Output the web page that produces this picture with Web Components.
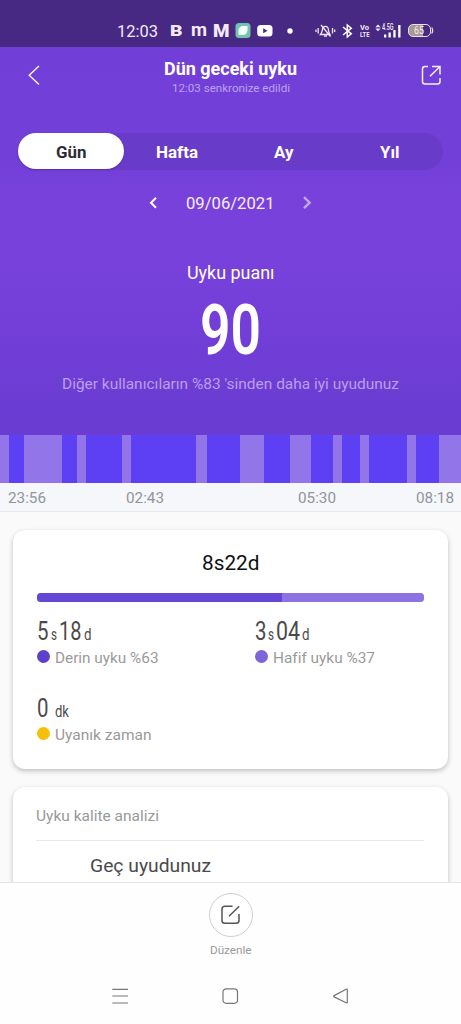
<!DOCTYPE html>
<html lang="tr">
<head>
<meta charset="utf-8">
<title>Dün geceki uyku</title>
<style>
html,body{margin:0;padding:0;background:#fafafa}
body{width:461px;height:1024px;overflow:hidden;font-family:Roboto,"Liberation Sans",sans-serif}
</style>
</head>
<body>
<sleep-app></sleep-app>
<script>
const define = (name, html) => {
  const t = document.createElement('template');
  t.innerHTML = html;
  customElements.define(name, class extends HTMLElement {
    constructor() {
      super();
      this.attachShadow({mode: 'open'}).append(t.content.cloneNode(true));
    }
  });
};

/* One line of text, condensed or widened to the width in "w". */
customElements.define('fit-text', class extends HTMLElement {
  connectedCallback() {
    if (this.shadowRoot) return;
    const w = +this.getAttribute('w'), s = this.getAttribute('s'), l = this.getAttribute('l') || 20;
    this.attachShadow({mode: 'open'}).innerHTML = `<style>
      :host{display:block;flex:none;width:${w}px;height:${l}px;line-height:${l}px;font-size:${s}px;white-space:nowrap}
      span{display:inline-block;transform-origin:0 50%}</style><span><slot></slot></span>`;
    const span = this.shadowRoot.querySelector('span');
    const n = span.getBoundingClientRect().width;
    if (n) span.style.transform = `scaleX(${w / n})`;
  }
});

define('status-bar', `<style>
:host{display:flex;height:47px;background:#472882;color:#f3eafa;box-sizing:border-box;padding:21px 0 0 117px;align-items:flex-start}
svg{display:block;flex:none}
.b{font-weight:900}
</style>
<fit-text w="41" s="16.8">12:03</fit-text>
<fit-text class="b" w="12.5" s="15.5" style="margin-left:11.5px">B</fit-text>
<fit-text class="b" w="16" s="18" l="18" style="margin-left:8.5px;font-weight:700">m</fit-text>
<fit-text class="b" w="16.5" s="19" style="margin-left:6.5px">M</fit-text>
<svg width="16" height="20" style="margin-left:5px"><rect x=".5" y="2" width="15" height="15" rx="3.5" fill="#70c5ac"/><path d="M3.5 13V8.5Q4.5 5 8 5H12.5V9.5Q11.5 14 8 14H4Z" fill="#f4fffb"/></svg>
<svg width="16" height="20" style="margin-left:6px"><rect x=".2" y="4" width="15.3" height="11.5" rx="3.5" fill="#fff"/><path d="M6.2 7.2L10.5 9.7L6.2 12.2Z" fill="#472882"/></svg>
<svg width="6" height="20" style="margin-left:14px"><circle cx="3" cy="10" r="2.7" fill="#fff"/></svg>
<svg width="21" height="20" style="margin-left:22px" fill="none" stroke="#efe6f7" stroke-width="1.3"><path d="M5.5 13.5C7 12 7 11 7.3 8.8C8 4.2 13 4.2 13.4 8.8C13.6 11 14 12 15 13.5ZM9 15.2H12M6 4L15.5 15.5M3.2 7V12.5M1 8.5V11M17.5 7V12.5M19.7 8.5V11"/></svg>
<svg width="11" height="20" style="margin-left:6px" fill="none" stroke="#fff" stroke-width="1.5"><path d="M1 6L9.3 12.8L5.3 16V4L9.3 7.2L1 14"/></svg>
<div style="margin-left:7px;width:10px;padding-top:3px;font-weight:700"><fit-text w="9" s="8" l="7">Vo</fit-text><fit-text w="9.5" s="8" l="7">LTE</fit-text></div>
<svg width="7" height="20" style="margin-left:5px"><path d="M.3 6.2L3 3.5L5.7 6.2ZM.3 7.5L3 10.2L5.7 7.5Z" fill="#efe6f7"/></svg>
<fit-text w="11.5" s="9" l="13" style="margin-right:-11.5px;font-weight:500">4.5G</fit-text>
<svg width="17" height="20" style="margin-left:2px" fill="#fff"><rect x="0" y="13.5" width="2.3" height="3"/><rect x="4.5" y="11.5" width="2.3" height="5"/><rect x="9.3" y="9" width="2.3" height="7.5"/><rect x="14.2" y="4" width="2.3" height="12.5"/></svg>
<div style="margin-left:7px;margin-top:3px;width:21px;height:11px;border:1px solid #e9dfee;border-radius:5px;background:linear-gradient(90deg,#a99a91 0 65%,#472882 65%);flex:none;display:flex;justify-content:center"><fit-text w="10" s="10" l="11.5">65</fit-text></div>
<svg width="3" height="20"><path d="M.7 6.5Q2.6 9.5 .7 12.5" fill="none" stroke="#e9dfee" stroke-width="1.3"/></svg>`);

define('page-header', `<style>
:host{display:flex;justify-content:space-between;height:68px;color:#fff;padding:0 18px 0 27px;align-items:flex-start}
svg{display:block;margin-top:17px}
div{display:flex;flex-direction:column;align-items:center;padding-top:12px;margin-right:7px}
</style>
<svg width="20" height="24" fill="none" stroke="#fff" stroke-width="1.3"><path d="M12 2L2.2 11.2L12 20.5"/></svg>
<div><fit-text w="133" s="18.3" l="20" style="font-weight:700">Dün geceki uyku</fit-text><fit-text w="118" s="11.5" l="18" style="color:#bda3ee">12:03 senkronize edildi</fit-text></div>
<svg width="22" height="24" fill="none" stroke="#f7effd" stroke-width="1.5"><path d="M7 2.5H4Q1.5 2.5 1.5 5V17.5Q1.5 20 4 20H16.5Q19 20 19 17.5V14M11 2.5H19V10.5M18.5 3L9 12.2"/></svg>`);

define('range-tabs', `<style>
:host{display:grid;grid-template-columns:repeat(4,1fr);width:425px;height:37px;margin:18px 0 0 18px;border-radius:19px;background:#693bc9;color:#fff;font-weight:700}
div{display:flex;justify-content:center;padding-top:9px}
.on{background:#fff;color:#2e2b33;border-radius:19px;height:27px;box-shadow:0 1px 2px #4b278099}
</style>
<div class="on"><fit-text w="30.5" s="16.8">Gün</fit-text></div><div><fit-text w="42" s="16.8">Hafta</fit-text></div><div><fit-text w="19.5" s="16.8">Ay</fit-text></div><div><fit-text w="19.5" s="16.8">Yıl</fit-text></div>`);

define('date-picker', `<style>
:host{display:flex;justify-content:center;height:20px;margin-top:23px;color:#f6eefd}
svg{display:block}
</style>
<svg width="10" height="20" fill="none" stroke="#fff" stroke-width="2"><path d="M7 4.7L2 9.7L7 14.7"/></svg>
<fit-text w="88.5" s="16.8" style="margin:0 27px">09/06/2021</fit-text>
<svg width="10" height="20" fill="none" stroke="#c2a9e6" stroke-width="2.3"><path d="M2 4.2L7.7 9.7L2 15.2"/></svg>`);

define('sleep-score', `<style>
:host{display:flex;flex-direction:column;align-items:center;height:222px;color:#fff}
</style>
<fit-text w="87.5" s="17.8" style="margin-top:50px">Uyku puanı</fit-text>
<fit-text w="61" s="70" l="70" style="margin-top:12px;font-weight:600">90</fit-text>
<fit-text w="337" s="15.3" style="margin-top:9px;color:#bb9fec">Diğer kullanıcıların %83 'sinden daha iyi uyudunuz</fit-text>`);

customElements.define('sleep-phases', class extends HTMLElement {
  connectedCallback() {
    if (this.shadowRoot) return;
    const edges = [0, 9.3, 24.3, 61.5, 77, 86, 122, 131.3, 196.3, 207, 240, 264, 290, 311, 332.5, 342, 360, 369.3, 407, 416.3, 439.3, 461];
    const bars = edges.slice(1).map((e, i) => `<i class="${i % 2 ? 'deep' : 'light'}" style="flex:${(e - edges[i]).toFixed(1)}"></i>`).join('');
    this.attachShadow({mode: 'open'}).innerHTML = `<style>
      :host{display:block;background:#f5f7fa}
      .bars{display:flex;height:48.5px}.light{background:#9275e8}.deep{background:#5d3ff4}
      .axis{display:flex;border-bottom:1px solid #e6e9eb;color:#91959b;padding:5px 8px 0 7.5px;box-sizing:border-box;height:28.5px}
      </style><div class="bars">${bars}</div><div class="axis">
      <fit-text w="38" s="15.2">23:56</fit-text><fit-text w="38" s="15.2" style="margin-left:80px">02:43</fit-text>
      <fit-text w="38" s="15.2" style="margin-left:134px">05:30</fit-text><fit-text w="38" s="15.2" style="margin-left:80px">08:18</fit-text></div>`;
  }
});

define('sleep-stat', `<style>
:host{display:block;color:#4b4b4b;height:77px}
.v{display:flex;height:30px;align-items:flex-start}
.k{display:flex;align-items:center;height:20px;color:#9a9a9a;padding-top:3px}
.k::before{content:"";width:13px;height:13px;border-radius:50%;background:var(--dot);margin:-3px 5px 0 0;flex:none}
</style><div class="v"><slot name="value"></slot></div><div class="k"><slot></slot></div>`);

define('duration-card', `<style>
:host{display:block;box-sizing:border-box;width:435px;height:239px;margin:18px 0 0 13px;padding:21px 24px 0;background:#fff;border-radius:12px;box-shadow:0 2px 5px #0000003d}
.total{display:block;margin:0 auto;color:#111}
.bar{height:9.5px;margin-top:18px;border-radius:3.5px;background:linear-gradient(90deg,#6547d6 0 63.3%,#8d72e3 63.3%)}
.grid{display:grid;grid-template-columns:218px 1fr;margin-top:12.5px}
.n{font-weight:450}
</style>
<fit-text class="total" w="57.5" s="20.8" l="24">8s22d</fit-text>
<div class="bar"></div>
<div class="grid">
<sleep-stat style="--dot:#5d40cc"><fit-text class="n" slot="value" w="11.5" s="26" l="33">5</fit-text><fit-text slot="value" w="6" s="16.5" l="39" style="margin-left:2.5px">s</fit-text><fit-text class="n" slot="value" w="22.5" s="26" l="33" style="margin-left:2px">18</fit-text><fit-text slot="value" w="7.5" s="16.5" l="39" style="margin-left:2px">d</fit-text><fit-text w="103.5" s="15.5">Derin uyku %63</fit-text></sleep-stat>
<sleep-stat style="--dot:#7d64d8"><fit-text class="n" slot="value" w="11.5" s="26" l="33">3</fit-text><fit-text slot="value" w="6" s="16.5" l="39" style="margin-left:1.5px">s</fit-text><fit-text class="n" slot="value" w="24" s="26" l="33" style="margin-left:1.5px">04</fit-text><fit-text slot="value" w="7.5" s="16.5" l="39" style="margin-left:2px">d</fit-text><fit-text w="102" s="15.5">Hafif uyku %37</fit-text></sleep-stat>
<sleep-stat style="--dot:#f8bf08"><fit-text class="n" slot="value" w="11.5" s="26" l="33">0</fit-text><fit-text class="n" slot="value" w="14" s="16.5" l="39" style="margin-left:6px">dk</fit-text><fit-text w="96.5" s="15.5">Uyanık zaman</fit-text></sleep-stat>
</div>`);

define('quality-card', `<style>
:host{display:block;box-sizing:border-box;width:435px;height:130px;margin:18px 0 0 13px;padding:19px 24px 0 23px;background:#fff;border-radius:12px;box-shadow:0 2px 5px #0000003d}
.head{color:#999}
hr{border:0;border-top:1px solid #e9e9e9;margin:14px 0 0}
.msg{color:#4a4a4a;margin:13px 0 0 53.5px}
</style>
<fit-text class="head" w="123" s="15.5">Uyku kalite analizi</fit-text><hr>
<fit-text class="msg" w="121" s="19.2" l="24">Geç uyudunuz</fit-text>`);

define('edit-bar', `<style>
:host{display:flex;flex-direction:column;align-items:center;height:84px;padding-top:10px;border-top:1px solid #e4e4e4;box-sizing:border-box;background:#fefefe}
.c{width:42px;height:42px;border:1px solid #cfcfcf;border-radius:50%;display:flex;align-items:center;justify-content:center;background:#fff}
</style>
<div class="c"><svg width="22" height="22" fill="none" stroke="#555" stroke-width="1.5"><path d="M12.5 2.2H5Q2 2.2 2 5V16.5Q2 19.3 5 19.3H16Q19 19.3 19 16.5V10M19.2 2.2L9 12.3"/></svg></div>
<fit-text w="41.5" s="11.5" l="18" style="margin-top:4px;color:#999">Düzenle</fit-text>`);

define('system-nav', `<style>
:host{display:flex;justify-content:space-between;padding:20px 111px 0 110px;height:38px;background:#fefefe}
svg{display:block}
</style>
<svg width="20" height="20" stroke="#777" stroke-width="1.2"><path d="M2.3 3.3H18M2.3 10H18M2.3 17H18"/></svg>
<svg width="20" height="20" fill="none" stroke="#777" stroke-width="1.2"><rect x="3" y="2.8" width="14.5" height="14.5" rx="3.2"/></svg>
<svg width="20" height="20" fill="none" stroke="#777" stroke-width="1.2"><path d="M17.3 4V16.2Q17.3 17.4 16.1 16.8L4.1 10.9Q3.1 10.3 4.1 9.6L16.1 3.2Q17.3 2.6 17.3 4Z"/></svg>`);

define('sleep-app', `<style>
:host{display:flex;flex-direction:column;width:461px;height:1024px;overflow:hidden;background:#fafafa}
.hero{height:388px;flex:none;background:linear-gradient(#713fd8,#733fd9 30%,#7941dc 38%,#7941dc 52%,#6a3cd2 96%)}
.body{flex:none;height:447.5px;overflow:hidden}
</style>
<status-bar></status-bar>
<div class="hero"><page-header></page-header><range-tabs></range-tabs><date-picker></date-picker><sleep-score></sleep-score></div>
<div class="body"><sleep-phases></sleep-phases><duration-card></duration-card><quality-card></quality-card></div>
<edit-bar></edit-bar><system-nav></system-nav>`);
</script>
</body>
</html>
